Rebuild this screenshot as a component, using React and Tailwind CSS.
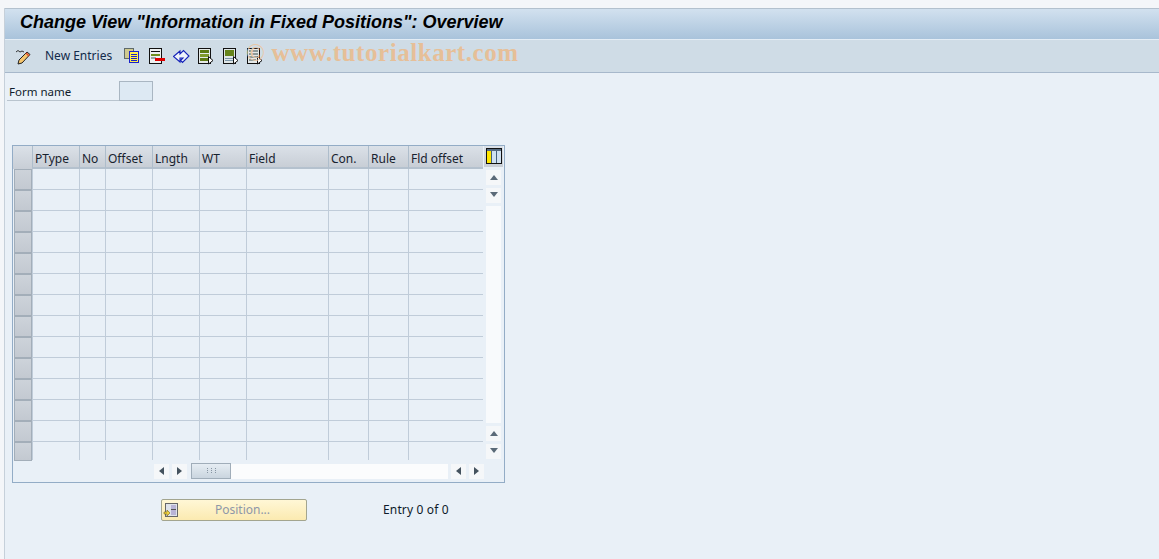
import React from "react";

const cols = [
  ["PType", "w-[47px]"],
  ["No", "w-[26px]"],
  ["Offset", "w-[47px]"],
  ["Lngth", "w-[47px]"],
  ["WT", "w-[47px]"],
  ["Field", "w-[82px]"],
  ["Con.", "w-[40px]"],
  ["Rule", "w-[40px]"],
  ["Fld offset", "w-[75px]"],
];
const rows = Array.from({ length: 14 });

function Tool({ children }) {
  return (
    <svg width="17" height="17" viewBox="0 0 17 17" className="shrink-0" shapeRendering="crispEdges">
      {children}
    </svg>
  );
}

function Pointer() {
  return <path d="M11.5 8.5 L16 12.5 L11.5 16 Z" fill="#ffffff" stroke="#111" strokeWidth="1" shapeRendering="auto" />;
}

function Up() {
  return (
    <div className="w-[15px] h-[15px] bg-[#f5f7f9] flex items-center justify-center">
      <div className="w-0 h-0 border-l-[4px] border-r-[4px] border-b-[5px] border-l-transparent border-r-transparent border-b-[#5a6a78]" />
    </div>
  );
}
function Down() {
  return (
    <div className="w-[15px] h-[15px] pb-[2px] bg-[#f5f7f9] flex items-center justify-center">
      <div className="w-0 h-0 border-l-[4px] border-r-[4px] border-t-[5px] border-l-transparent border-r-transparent border-t-[#5a6a78]" />
    </div>
  );
}
function Left() {
  return (
    <div className="w-[15px] h-[15px] bg-[#f5f7f9] flex items-center justify-center">
      <div className="w-0 h-0 border-t-[4px] border-b-[4px] border-r-[5px] border-t-transparent border-b-transparent border-r-[#44525e]" />
    </div>
  );
}
function Right() {
  return (
    <div className="w-[15px] h-[15px] bg-[#f5f7f9] flex items-center justify-center">
      <div className="w-0 h-0 border-t-[4px] border-b-[4px] border-l-[5px] border-t-transparent border-b-transparent border-l-[#44525e]" />
    </div>
  );
}

export default function App() {
  return (
    <div
      className="w-[1159px] h-[559px] overflow-hidden bg-[#f4f6f9] pt-[8px] pl-[4px] text-[12px] text-[#0c1a2c]"
      style={{ fontFamily: '"Noto Sans", "Open Sans", sans-serif' }}
    >
      <div className="h-[551px] flex flex-col border-l border-[#c6d0da]">
        <div className="h-[31px] shrink-0 flex items-center pl-[15px] pb-[4px] bg-gradient-to-b from-[#d2e1ef] to-[#a9c3db] border-t border-[#b3c1ce]">
          <span
            className="text-[18px] font-bold italic text-black whitespace-nowrap"
            style={{ fontFamily: '"Liberation Sans", Arial, sans-serif' }}
          >
            Change View "Information in Fixed Positions": Overview
          </span>
        </div>
        <div className="h-[34px] shrink-0 flex items-center bg-[#cfdce6] border-t border-[#e4edf5] border-b border-b-[#a7b8cb] pl-[10px]">
          <Tool>
            <path d="M1 4 Q3 1 5 4 Q7 2 9 4" fill="none" stroke="#333" strokeWidth="1" shapeRendering="auto" />
            <path d="M4 12 L12 4 L15 6.5 L7 15 L3 16 Z" fill="#f6c56c" stroke="#222" strokeWidth="1" shapeRendering="auto" />
            <path d="M11 5 L14 8" stroke="#d8492f" strokeWidth="1.4" shapeRendering="auto" />
          </Tool>
          <span className="ml-[13px] w-[79px] whitespace-nowrap text-[#122a4a]">New Entries</span>
          <div className="flex items-center gap-[7.4px]">
            <Tool>
              <rect x="0.5" y="0.5" width="9" height="10" fill="#cfc98f" stroke="#5f6a6a" />
              <rect x="5.5" y="3.5" width="9" height="11" fill="#fff04a" stroke="#1a22c8" />
              <path d="M7 6.5h6M7 8.5h6M7 10.5h6M7 12.5h6" stroke="#1a22c8" />
            </Tool>
            <Tool>
              <rect x="1.5" y="0.5" width="12" height="15" fill="#eef1f1" stroke="#111" />
              <path d="M3 3.5h9" stroke="#111" />
              <rect x="3" y="6" width="9" height="2" fill="#6f8f1f" />
              <rect x="3" y="9" width="5" height="2" fill="#98a6a6" />
              <rect x="7" y="10" width="10" height="3" fill="#e00000" />
            </Tool>
            <Tool>
              <path d="M0.5 8.5 L7 3 V6 L10.5 2.5 L16 8 L9.5 14.5 L7.5 12.5 L10 10 L7 10 V14 Z" fill="#eef3fa" stroke="#1421b8" strokeWidth="1.1" shapeRendering="auto" />
            </Tool>
            <Tool>
              <rect x="1.5" y="0.5" width="12" height="15" fill="#e5eae8" stroke="#111" />
              <rect x="3" y="2" width="9" height="3" fill="#5d7a12" />
              <rect x="3" y="6" width="9" height="3" fill="#7f9a2a" />
              <rect x="3" y="10" width="9" height="3" fill="#5d7a12" />
              <Pointer />
            </Tool>
            <Tool>
              <rect x="1.5" y="0.5" width="12" height="15" fill="#dfe6e6" stroke="#111" />
              <rect x="3" y="2" width="9" height="6" fill="#66841a" />
              <rect x="3" y="10" width="8" height="1" fill="#7c96a8" />
              <rect x="3" y="12" width="8" height="1" fill="#7c96a8" />
              <Pointer />
            </Tool>
            <Tool>
              <rect x="1.5" y="0.5" width="12" height="15" fill="#e5e9e9" stroke="#111" />
              <rect x="3" y="2" width="9" height="2" fill="#8d9a9a" />
              <rect x="3" y="5" width="9" height="2" fill="#8d9a9a" />
              <rect x="3" y="8" width="9" height="2" fill="#8d9a9a" />
              <rect x="3" y="11" width="7" height="2" fill="#8d9a9a" />
              <Pointer />
            </Tool>
          </div>
          <span
            className="relative -ml-[17px] -mt-[7px] text-[25px] font-bold tracking-[0.55px] text-[#e6bf98] whitespace-nowrap"
            style={{ fontFamily: '"Liberation Serif", serif' }}
          >
            <span className="font-normal text-[#e8c8a8]">©</span>
            <span className="ml-[6px]">www.tutorialkart.com</span>
          </span>
        </div>

        <div className="flex-1 bg-[#e9f0f7] flex flex-col pl-[4px]">
          <div className="mt-[8px] -ml-[2px] flex items-start">
            <div className="w-[112px] h-[20px] border-b border-[#b9c4ce] pl-[2px] leading-[21px] text-[11.5px] text-[#101c2c]">Form name</div>
            <div className="w-[34px] h-[20px] bg-[#dde9f3] border border-[#a9b6c2]" />
          </div>

          <div className="mt-[44px] ml-[3px] w-[493px] h-[338px] border border-[#93acc6] flex flex-col">
            <div className="flex h-[23px] shrink-0">
              <div className="w-[19px] bg-gradient-to-b from-[#dbe1e8] to-[#c8ced6]" />
              {cols.map(([label, w]) => (
                <div
                  key={label}
                  className={`${w} shrink-0 h-[23px] bg-gradient-to-b from-[#dbe1e8] to-[#c8ced6] border-l border-[#aebdcb] border-b-2 border-b-[#b4c1ce] pl-[2px] leading-[26px] whitespace-nowrap text-[#18222e]`}
                >
                  {label}
                </div>
              ))}
              <div className="ml-[1px] w-[19px] h-[21px] pt-[2px] flex justify-center bg-gradient-to-b from-[#dbe1e8] to-[#c8ced6]">
                <svg width="16" height="16" viewBox="0 0 16 16" shapeRendering="crispEdges">
                  <rect x="0.5" y="0.5" width="15" height="15" fill="#cfe0f0" stroke="#111" />
                  <rect x="1" y="1" width="14" height="2" fill="#556a80" />
                  <rect x="1" y="3" width="4" height="12" fill="#ffe600" />
                  <path d="M5.5 3v12M10.5 3v12" stroke="#44607a" />
                </svg>
              </div>
            </div>
            <div className="flex">
              <div className="flex flex-col">
                {rows.map((_, i) => (
                  <div key={i} className={`flex ${i === 13 ? "h-[19px]" : "h-[21px]"}`}>
                    <div className="ml-[1px] w-[18px] bg-gradient-to-b from-[#cdd3da] to-[#c3c9d1] border border-[#a3aeb9]" />
                    {cols.map(([label, w]) => (
                      <div
                        key={label}
                        className={`${w} shrink-0 border-l border-[#c0ccd9] ${i === 13 ? "mb-[1px]" : "border-b border-b-[#c0ccd9]"}`}
                      />
                    ))}
                  </div>
                ))}
              </div>
              <div className="ml-[3px] w-[15px] flex flex-col h-[290px] pt-[1px]">
                <div className="flex flex-col gap-[3px]">
                  <Up />
                  <Down />
                </div>
                <div className="flex-1 bg-[#f8fafc] my-[3px]" />
                <div className="flex flex-col gap-[3px]">
                  <Up />
                  <Down />
                </div>
              </div>
            </div>
            <div className="flex items-center h-[16px] mt-[2px] pl-[141px] gap-[3px]">
              <Left />
              <Right />
              <div className="ml-[1px] w-[40px] h-[16px] bg-gradient-to-b from-[#e6edf3] to-[#cad5df] border border-[#a0adb9] flex items-center justify-center">
                <svg width="9" height="6" viewBox="0 0 9 6" shapeRendering="crispEdges">
                  <path d="M0 0h1v1H0zM4 0h1v1H4zM8 0h1v1H8zM0 2h1v1H0zM4 2h1v1H4zM8 2h1v1H8zM0 4h1v1H0zM4 4h1v1H4zM8 4h1v1H8z" fill="#8795a3" />
                </svg>
              </div>
              <div className="-ml-[3px] w-[217px] h-[15px] bg-[#fbfcfd]" />
              <Left />
              <Right />
            </div>
          </div>

          <div className="mt-[16px] flex items-center">
            <div className="ml-[152px] w-[146px] h-[22px] flex items-center rounded-[2px] border border-[#a3a58f] bg-gradient-to-b from-[#fff7d6] to-[#fbeab0]">
              <svg width="16" height="16" viewBox="0 0 16 16" className="ml-[1px] shrink-0">
                <rect x="2.5" y="1.5" width="12" height="13" fill="#dfe3ea" stroke="#666" />
                <rect x="8" y="3" width="5" height="10" fill="#b9b4d6" />
                <path d="M8 7.5h5" stroke="#555" />
                <path d="M1 10h3V8l3 3-3 3v-2H1z" fill="#f0d040" stroke="#7a6a10" strokeWidth="0.6" />
              </svg>
              <span className="flex-1 text-center text-[#8e97a8]">Position...</span>
            </div>
            <span className="ml-[76px] tracking-[0.15px] text-[#0e1a2a]">Entry 0 of 0</span>
          </div>
        </div>
      </div>
    </div>
  );
}
